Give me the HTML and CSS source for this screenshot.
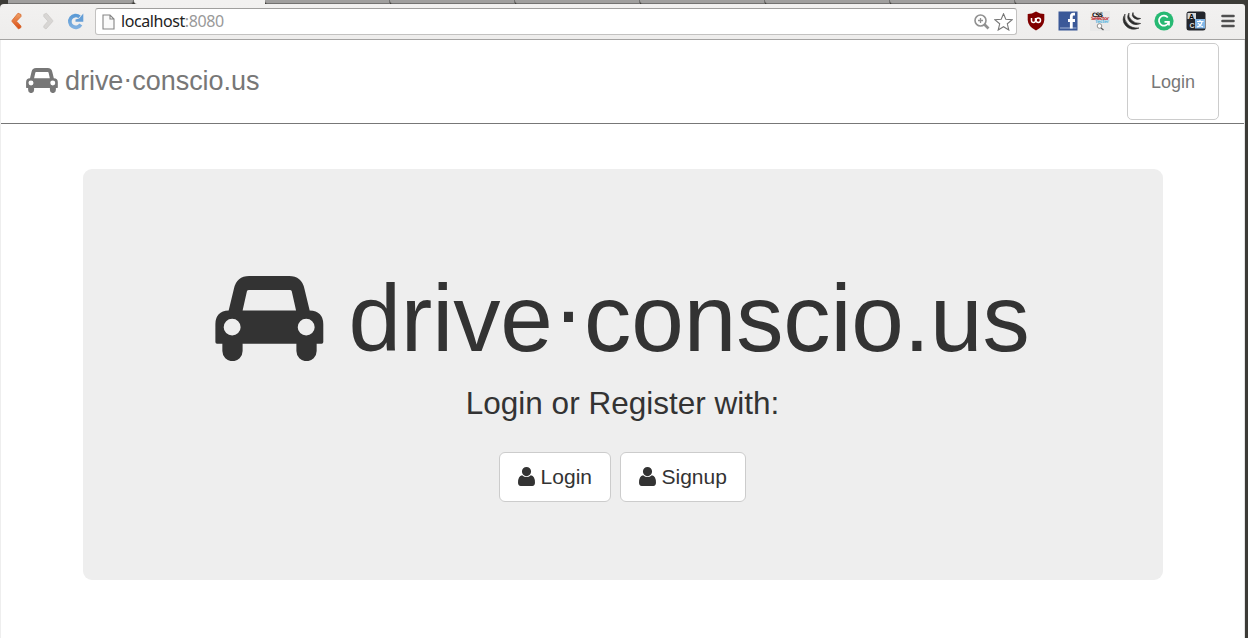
FILE: index.html
```
<!DOCTYPE html>
<html lang="en">
<head>
    <meta charset="utf-8">
    <title>drive·conscio.us</title>
    <link rel="stylesheet" href="styles.css">
</head>
<body>
    <svg class="sprite">
        <symbol id="car" viewBox="0 0 326 256">
            <path fill-rule="evenodd" d="M40 104 L56 38 Q64 0 102 0 H222 Q260 0 268 38 L284 104 Q325 106 325 145 V199 Q325 204 320 204 H305 V226 A30.500 30.500 0 0 1 244 226 V204 H82 V226 A30.500 30.500 0 0 1 21 226 V204 H5 Q0 204 0 199 V145 Q0 106 40 104 Z M82 104 H243 L230 46 Q229 42 224 42 H101 Q96 42 95 46 Z M25 154 A25.500 25.500 0 1 0 76 154 A25.500 25.500 0 1 0 25 154 Z M248 154 A25.500 25.500 0 1 0 299 154 A25.500 25.500 0 1 0 248 154 Z"/>
        </symbol>
        <symbol id="user" viewBox="0 0 50 56">
            <path d="M25 0 A13.500 13.500 0 0 1 25 27 A13.500 13.500 0 0 1 25 0 Z M12 24 Q25 35 38 24 Q50 26 50 46 Q50 56 42 56 H8 Q0 56 0 46 Q0 26 12 24 Z"/>
        </symbol>
    </svg>

    <div class="window">
        <div class="tabs">
            <span class="tab first"></span>
            <span class="tab active"></span>
            <span class="tab"></span>
            <span class="tab"></span>
            <span class="tab"></span>
            <span class="tab"></span>
            <span class="tab"></span>
            <span class="tab"></span>
            <span class="tab last"></span>
        </div>

        <div class="toolbar">
            <div class="nav-buttons">
                <svg width="95" height="35" viewBox="0 0 95 35">
                    <defs>
                        <linearGradient id="orange" x1="0" y1="0" x2="0" y2="1"><stop offset="0" stop-color="#f0a268"/><stop offset="1" stop-color="#d94b14"/></linearGradient>
                        <linearGradient id="blue" x1="0" y1="0" x2="0" y2="1"><stop offset="0" stop-color="#5c9bd6"/><stop offset="1" stop-color="#7fb0e0"/></linearGradient>
                    </defs>
                    <path d="M18 9.200 L21 10.500 V12.500 L16.500 17.200 L21 22 V23.500 L18.500 25 L12 17.500 V16.500 Z" fill="url(#orange)" stroke="#d7692f" stroke-width=".8" stroke-linejoin="round"/>
                    <path d="M46.500 9.200 L43.800 10.500 V12.500 L48 17.200 L43.800 22 V23.500 L46 25 L52.700 17.500 V16.500 Z" fill="#d8d6d4" stroke="#cbc9c7" stroke-width=".8" stroke-linejoin="round"/>
                    <path d="M79.500 12.900 A5.900 5.900 0 1 0 80.800 20.500" fill="none" stroke="url(#blue)" stroke-width="3.600"/>
                    <path d="M83.300 9.500 V17.800 H75.500 V15.500 L79 14.500 Z" fill="#659fd7"/>
                </svg>
            </div>
            <div class="omnibox">
                <svg width="13" height="16" viewBox="0 0 13 16"><path d="M1 1 H8 L12 5 V15 H1 Z M8 1 V5 H12" fill="#fafafa" stroke="#858585" stroke-width="1.100"/></svg>
                <span class="url">localhost<span class="port">:8080</span></span>
                <svg class="zoom" width="16" height="16" viewBox="0 0 16 16" fill="none" stroke="#919191"><circle cx="6.500" cy="6.500" r="5.500" stroke-width="1.600"/><path d="M4 6.500 H9 M6.500 4 V9" stroke-width="1.300"/><path d="M10.500 10.500 L14.500 14.500" stroke-width="2.600"/></svg>
                <svg class="star" width="19" height="18" viewBox="0 0 19 18"><path d="M9.500 .8 L11.800 6.300 L18 6.800 L13.300 10.800 L14.800 17 L9.500 13.700 L4.200 17 L5.700 10.800 L1 6.800 L7.200 6.300 Z" fill="#fff" stroke="#777" stroke-width="1.100"/></svg>
            </div>
            <div class="extensions">
                <svg viewBox="0 0 20 20"><path d="M10 .5 Q14 3 18.300 3 V9 Q18 15.500 10 19.500 Q2 15.500 1.700 9 V3 Q6 3 10 .5 Z" fill="#800000"/><path d="M5.500 7 V9.500 Q5.500 11.500 7.500 11.500 Q9.500 11.500 9.500 9.500 V7" fill="none" stroke="#fff" stroke-width="1.500"/><circle cx="12.300" cy="9.300" r="2.200" fill="none" stroke="#fff" stroke-width="1.500"/></svg>
                <svg viewBox="0 0 20 20"><rect x=".5" y=".5" width="19" height="19" fill="#3b5998"/><path d="M2 17 H18.500" stroke="#6f87b7" stroke-width="2"/><path d="M17 3.200 H15.500 Q13.300 3.200 13.300 6 V17.500 M10 9.500 H17" fill="none" stroke="#fff" stroke-width="2.800"/></svg>
                <svg viewBox="0 0 20 20"><rect width="20" height="20" fill="#e9e9e9"/><g class="tester"><text x="2" y="5.500" textLength="11" fill="#111">CSS</text><text x="1" y="9" textLength="18" fill="#c22f2f" font-size="4.800">Selector</text><text x="5" y="12" textLength="14" fill="#61b8df" font-size="4.500">Tester</text></g><circle cx="9.500" cy="15" r="2.300" fill="#fff" stroke="#777" stroke-width=".8"/><path d="M11 17 L13.500 19" stroke="#555" stroke-width="1.300"/></svg>
                <svg viewBox="0 0 20 20"><g fill="#2b2b2b" stroke="#2b2b2b" stroke-width=".6"><path d="M3 3 Q-1 9 3.500 14.500 Q9 20.500 17 17 Q9.500 17.500 5.500 13 Q1.500 8.500 3 3 Z"/><path d="M7 2 Q4 6.500 7.500 10.500 Q12 15.500 18.700 12.500 Q12.500 12.500 9.300 9 Q6 5.500 7 2 Z"/><path d="M11 1.500 Q9 4.500 12 7 Q15 9.500 18.700 7.500 Q15.500 7.500 13 5.500 Q10.800 3.700 11 1.500 Z"/></g></svg>
                <svg viewBox="0 0 20 20"><circle cx="10" cy="10" r="9.600" fill="#27b973"/><path d="M13.800 6.500 A5 5 0 1 0 14.600 11.500 M10.500 10.800 H15 V14.500" fill="none" stroke="#fff" stroke-width="1.700"/></svg>
                <svg viewBox="0 0 20 20"><rect x=".5" y=".5" width="19" height="19" rx="2.500" fill="#22252b"/><path d="M1.500 2 H10 V8 H1.500 Z" fill="#d5d5d5"/><text class="letter" x="3" y="8">A</text><text class="letter" x="3.500" y="16.500" fill="#ddd">C</text><rect x="9" y="8" width="10" height="9.500" fill="#82b7e8"/><path d="M11 10.500 H17.500 M14 9 V10.500 M16 11 Q15 15 11 16 M12 12 Q14 15 17 16" fill="none" stroke="#fff" stroke-width="1.200"/></svg>
                <svg viewBox="0 0 20 20"><path d="M4.500 5 H15.500 M4.500 10 H15.500 M4.500 15 H15.500" stroke="#505050" stroke-width="2.600" stroke-linecap="round"/></svg>
            </div>
        </div>

        <div class="page">
            <nav class="navbar">
                <a class="brand"><svg class="brand-car"><use href="#car"/></svg><span>drive<span class="dot">·</span>conscio.us</span></a>
                <a class="nav-login">Login</a>
            </nav>
            <div class="jumbotron">
                <h1><svg class="hero-car"><use href="#car"/></svg><span>drive<span class="dot">·</span>conscio.us</span></h1>
                <p>Login or Register with:</p>
                <div class="buttons">
                    <a class="btn"><svg><use href="#user"/></svg>Login</a>
                    <a class="btn"><svg><use href="#user"/></svg>Signup</a>
                </div>
            </div>
        </div>
    </div>
</body>
</html>
```
FILE: styles.css
```
* {
    box-sizing: border-box;
}
body {
    margin: 0;
    height: 638px;
    overflow: hidden;
    background: #3c3b37;
    font-family: "Liberation Sans", Arial, sans-serif;
    color: #333;
}
svg {
    display: block;
    flex: none;
}
.sprite {
    display: none;
}
.window {
    width: 1245px;
    height: 638px;
    display: flex;
    flex-direction: column;
}

/* browser chrome */
.tabs {
    display: flex;
    height: 4px;
    padding-left: 8px;
}
.tab {
    width: 125px;
    background: #a09f9e;
    border-bottom: 1px solid #737271;
    border-right: 1px solid #737271;
    border-bottom-left-radius: 3px;
}
.tab.first {
    width: 126px;
    border-radius: 0 0 4px 0;
}
.tab.active {
    width: 131px;
    background: #f2f1f0;
    border: 0;
}
.tab.last {
    border-right: 0;
}
.toolbar {
    display: flex;
    height: 36px;
    background: linear-gradient(#f2f1f0, #eeedec);
    border-bottom: 1px solid #a5a4a3;
    border-radius: 4px 3px 0 0;
}
.nav-buttons {
    width: 95px;
}
.omnibox {
    display: flex;
    align-items: center;
    width: 922px;
    height: 27px;
    margin-top: 4px;
    padding: 0 3px 0 6px;
    background: #fff;
    border: 1px solid #c3c2c1;
    border-top-color: #a09f9e;
    border-radius: 3px;
}
.url {
    margin: -2px 0 0 6px;
    font: 16px "Noto Sans", sans-serif;
    letter-spacing: -0.42px;
    color: #222;
}
.port {
    color: #999;
}
.zoom {
    margin-left: auto;
}
.star {
    margin-left: 4px;
}
.extensions {
    display: flex;
    gap: 12px;
    margin: 7px 0 0 8.5px;
}
.extensions svg {
    width: 20px;
    height: 20px;
}
.tester {
    font: bold 6px "DejaVu Sans", sans-serif;
}
.letter {
    font: bold 7px "Liberation Sans", sans-serif;
}

/* page */
.page {
    flex: 1;
    background: #fff;
    border-left: 1px solid #eee;
    border-right: 1px solid #e4e4e4;
}
.navbar {
    display: flex;
    justify-content: space-between;
    height: 84px;
    padding: 3px 25px 0;
    border-bottom: 1px solid #777;
    color: #777;
}
.brand {
    display: flex;
    align-items: center;
    height: 76px;
    font-size: 27px;
    letter-spacing: -0.04px;
}
.brand-car {
    width: 32px;
    height: 25px;
    margin: -1px 7px 0 0;
    fill: #777;
}
/* lift the separator to mid x-height */
.dot {
    line-height: 0;
    vertical-align: 0.09em;
}
.nav-login {
    width: 92px;
    height: 77px;
    border: 1px solid #ccc;
    border-radius: 5px;
    font-size: 18px;
    line-height: 76px;
    text-align: center;
}
.jumbotron {
    width: 1080px;
    height: 411px;
    margin: 45px 0 0 82px;
    padding: 97px 1px 0 0;
    background: #eee;
    border-radius: 9px;
}
.jumbotron h1 {
    display: flex;
    align-items: center;
    justify-content: center;
    height: 104px;
    margin: 0;
    font-size: 94.5px;
    font-weight: normal;
    line-height: 104px;
    letter-spacing: -0.1px;
}
.hero-car {
    width: 109px;
    height: 85px;
    margin-right: 24px;
    fill: #333;
}
.jumbotron p {
    margin: 11px 0 27px;
    font-size: 31.5px;
    line-height: 44px;
    text-align: center;
}
.buttons {
    display: flex;
    justify-content: center;
    gap: 9px;
}
.btn {
    display: flex;
    align-items: center;
    height: 50px;
    padding: 0 18px;
    background: #fff;
    border: 1px solid #ccc;
    border-radius: 6px;
    font-size: 21px;
}
.btn svg {
    width: 17px;
    height: 19px;
    margin: -2px 5.5px 0 0;
    fill: #333;
}
```
